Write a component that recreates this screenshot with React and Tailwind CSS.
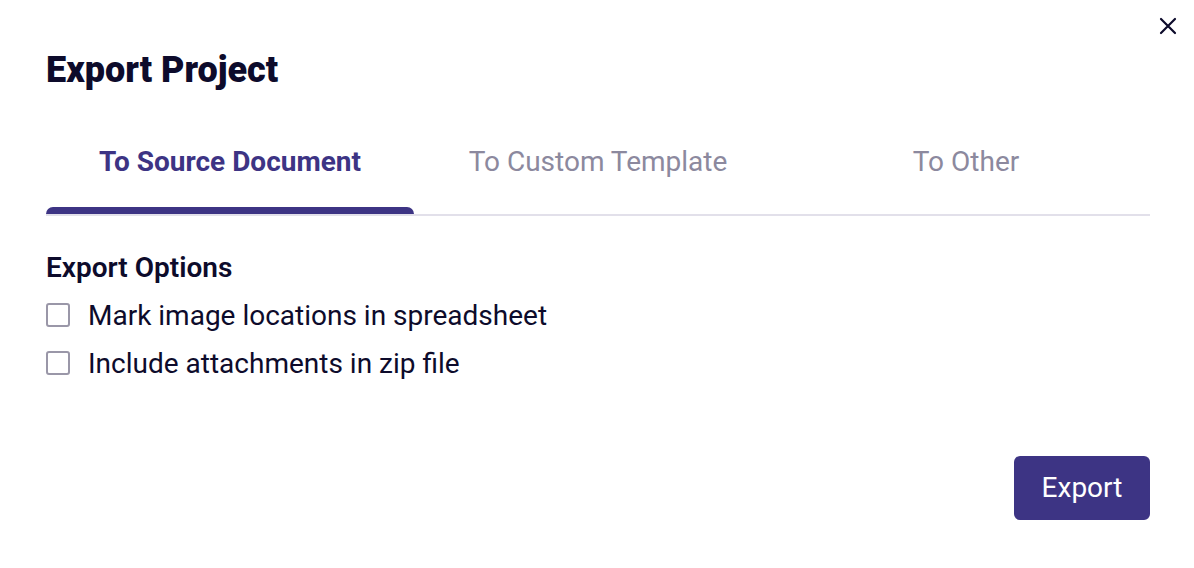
import React from "react";

export default function App() {
  const font = { fontFamily: "Roboto, 'Liberation Sans', sans-serif" };
  return (
    <div className="w-[1194px] h-[568px] bg-white relative text-[#0d0b2b]" style={font}>
      <button className="absolute right-[16px] top-[16px] w-[20px] h-[20px] flex items-center justify-center">
        <svg width="18" height="18" viewBox="0 0 18 18" fill="none" stroke="#0d0b2b" strokeWidth="2.2" strokeLinecap="round">
          <path d="M2 2L16 16M16 2L2 16" />
        </svg>
      </button>
      <div className="pl-[46px] pr-[44px] pt-[50px] flex flex-col">
        <h1 className="text-[36px] leading-[40px] font-black">Export Project</h1>
        <div className="mt-[27px] flex border-b-2 border-[#e2e0ea]">
          <div className="flex-1 flex flex-col items-center">
            <div className="h-[90px] flex items-center text-[28px] font-bold text-[#3d3484]">To Source Document</div>
            <div className="h-[7px] w-full bg-[#3d3484] rounded-t-[8px]"></div>
          </div>
          <div className="flex-1 flex flex-col items-center">
            <div className="h-[90px] flex items-center text-[28px] text-[#8c899e]">To Custom Template</div>
          </div>
          <div className="flex-1 flex flex-col items-center">
            <div className="h-[90px] flex items-center text-[28px] text-[#8c899e]">To Other</div>
          </div>
        </div>
        <div className="mt-[35px] text-[28px] leading-[34px] font-semibold">Export Options</div>
        <div className="mt-[14px] flex flex-col gap-[14px]">
          {["Mark image locations in spreadsheet", "Include attachments in zip file"].map((t) => (
            <label key={t} className="flex items-center gap-[18px]">
              <span className="w-[24px] h-[24px] border-2 border-[#9a97a8] rounded-[3px] box-border -mt-[2px]"></span>
              <span className="text-[28px] leading-[34px]">{t}</span>
            </label>
          ))}
        </div>
        <div className="mt-[75px] flex justify-end">
          <button className="w-[136px] h-[64px] bg-[#3d3484] text-white text-[28px] rounded-[6px]">Export</button>
        </div>
      </div>
    </div>
  );
}
